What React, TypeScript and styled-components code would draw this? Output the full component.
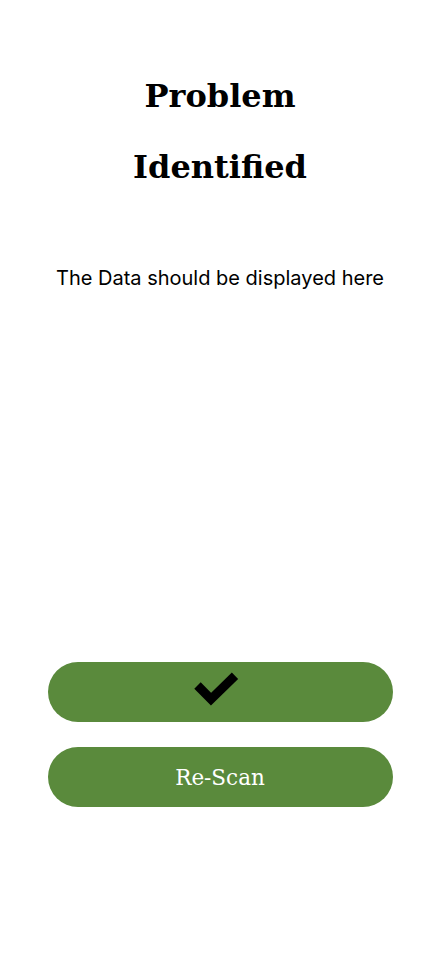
import React from "react";
import styled, { createGlobalStyle } from "styled-components";

const Global = createGlobalStyle`
  html, body { margin: 0; padding: 0; background: #ffffff; }
  body { font-family: "Inter", sans-serif; }
`;

const Page = styled.div`
  width: 440px;
  min-height: 956px;
  display: flex;
  flex-direction: column;
  align-items: center;
  box-sizing: border-box;
  padding-top: 61px;
`;

const Title = styled.h1`
  margin: 0;
  width: 200px;
  text-align: center;
  font-family: "DejaVu Serif", serif;
  font-weight: 700;
  font-size: 32px;
  line-height: 71px;
  color: #000;
`;

const Info = styled.p`
  margin: 63px 0 0;
  font-family: "Inter", sans-serif;
  font-size: 20px;
  line-height: 24px;
  color: #000;
`;

const Actions = styled.div`
  margin-top: 372px;
  display: flex;
  flex-direction: column;
  gap: 25px;
`;

const PillButton = styled.button`
  width: 345px;
  height: 60px;
  border: none;
  border-radius: 30px;
  background: #5a8a3c;
  display: flex;
  align-items: center;
  justify-content: center;
  font-family: "DejaVu Serif", serif;
  font-size: 21.5px;
  color: #ffffff;
  padding: 0;
  cursor: pointer;
`;

const CheckMark = styled.svg`
  width: 45px;
  height: 34px;
  margin: 0 8px 6px 0;
  display: block;
`;

export default function App() {
  return (
    <>
      <Global />
      <Page>
        <Title>Problem Identified</Title>
        <Info>The Data should be displayed here</Info>
        <Actions>
          <PillButton aria-label="Confirm">
            <CheckMark viewBox="0 0 45 34">
              <polyline
                points="3.5,13.5 17,27.2 41,3.7"
                fill="none"
                stroke="#000"
                strokeWidth={9}
                strokeLinecap="butt"
                strokeLinejoin="miter"
              />
            </CheckMark>
          </PillButton>
          <PillButton>Re-Scan</PillButton>
        </Actions>
      </Page>
    </>
  );
}
